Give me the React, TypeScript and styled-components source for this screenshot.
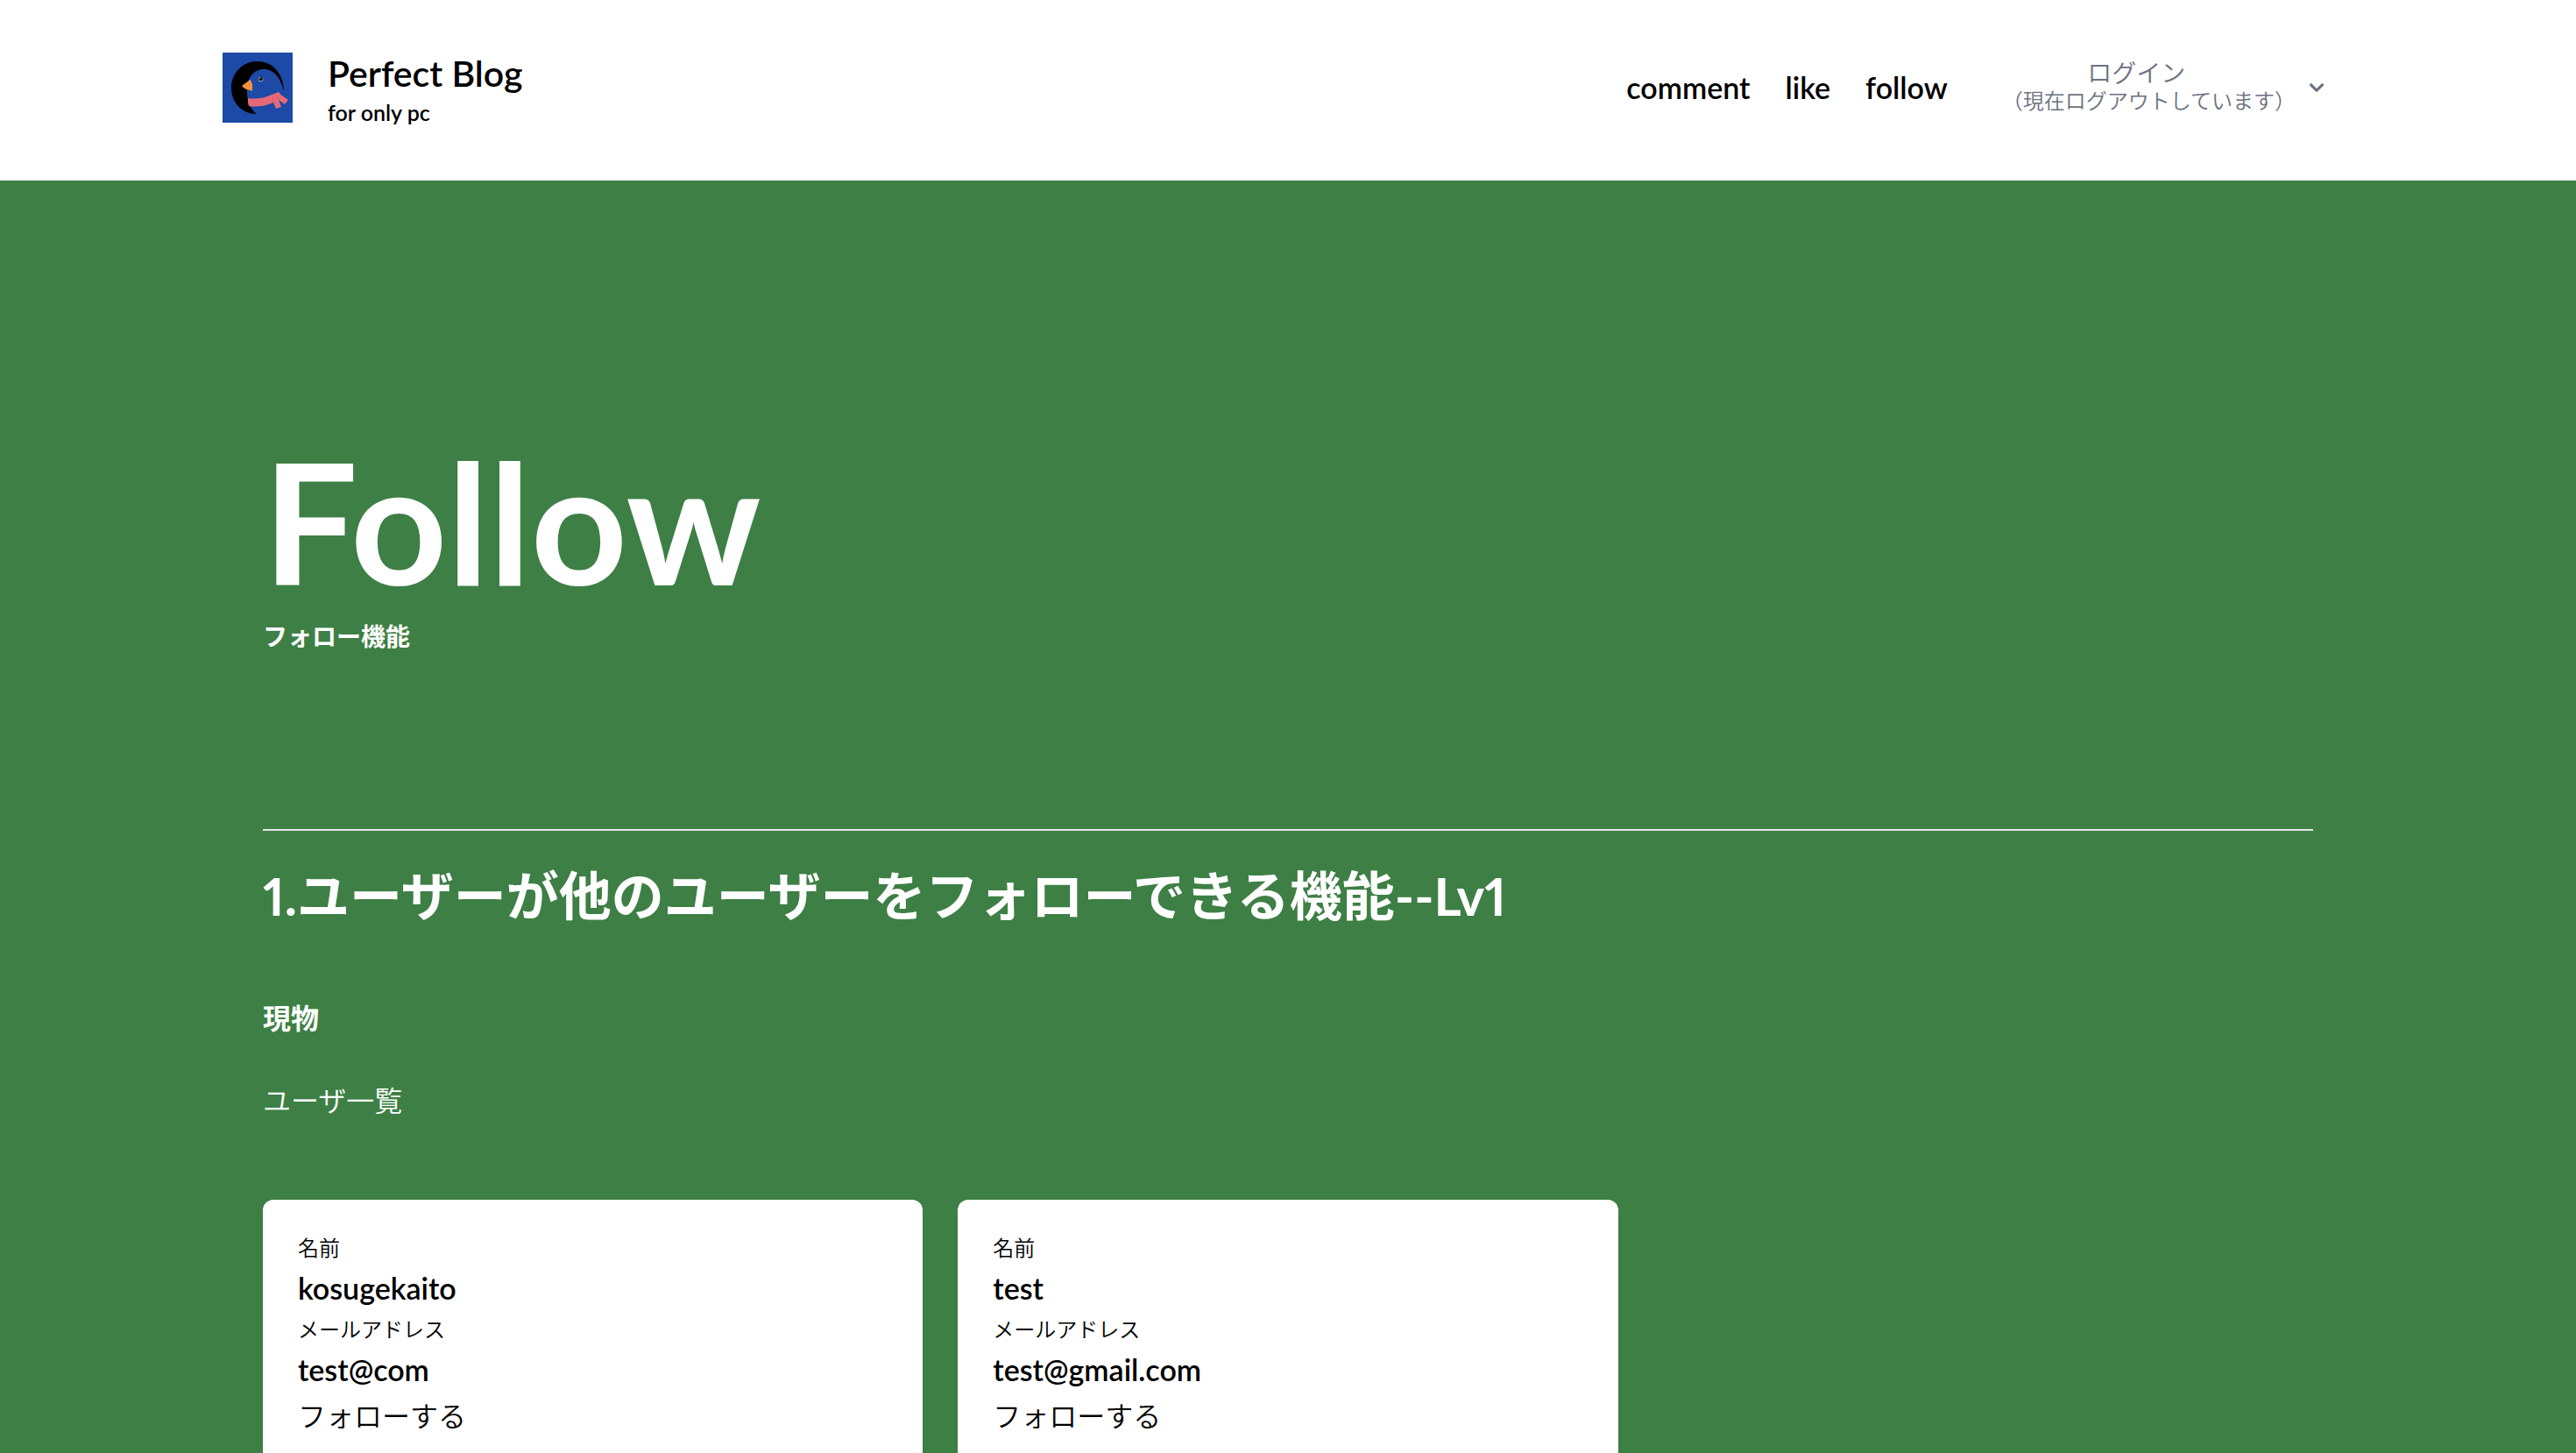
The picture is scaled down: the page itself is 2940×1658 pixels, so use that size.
import React from "react";
import styled, { createGlobalStyle } from "styled-components";

const GlobalStyle = createGlobalStyle`
  *, *::before, *::after { box-sizing: border-box; }
  html { background: #3e7f45; }
  body {
    margin: 0;
    color: #000;
    font-family: Lato, "Noto Sans CJK JP", sans-serif;
    font-size: 32px;
    line-height: 48px;
    font-variant-numeric: proportional-nums;
  }
  h1, h2, h3, p, dl, dd, ul { margin: 0; padding: 0; }
  a { color: inherit; text-decoration: none; }
`;

const Page = styled.div`
  background: #3e7f45;
  color: #fff;
`;

const Header = styled.header`
  background: #fff;
  color: #000;
  border-bottom: 2px solid #f3f4f6;
`;

const HeaderInner = styled.div`
  max-width: 2560px;
  height: 204px;
  margin: 0 auto;
  padding: 0 64px 4px;
  display: flex;
  align-items: center;
  justify-content: space-between;
`;

const Brand = styled.a`
  display: flex;
  align-items: center;
  gap: 40px;
`;

const Logo = styled.svg`
  display: block;
  width: 80px;
  height: 80px;
`;

const BrandText = styled.span`
  display: flex;
  flex-direction: column;
  padding-top: 8px;
  font-weight: 600;
`;

const BrandName = styled.span`
  font-size: 41px;
  line-height: 48px;
`;

const BrandNote = styled.span`
  font-size: 25px;
  line-height: 40px;
`;

const HeaderRight = styled.div`
  display: flex;
  align-items: center;
  gap: 40px;
`;

const Nav = styled.nav`
  display: flex;
  gap: 40px;
  font-size: 34px;
  font-weight: 600;
`;

const AccountButton = styled.button`
  display: flex;
  align-items: center;
  gap: 8px;
  padding: 0 26px 0 22px;
  border: 0;
  background: none;
  color: #6b7280;
  font-family: inherit;
  font-weight: 350;
  text-align: center;
  cursor: pointer;
`;

const AccountText = styled.span`
  display: flex;
  flex-direction: column;
  padding-bottom: 2px;
`;

const AccountAction = styled.span`
  padding-right: 28px;
  font-size: 28px;
  line-height: 32px;
`;

const AccountState = styled.span`
  font-size: 24px;
  line-height: 32px;
`;

const Chevron = styled.svg`
  display: block;
  width: 32px;
  height: 32px;
  fill: currentColor;
`;

const Main = styled.main`
  padding: 292px 300px 0;
`;

const Hero = styled.section`
  padding-bottom: 200px;
  font-weight: 600;
`;

const HeroTitle = styled.h1`
  font-size: 192px;
  line-height: 192px;
  font-weight: 700;
`;

const HeroCaption = styled.p`
  margin-top: 16px;
  font-size: 28px;
  line-height: 40px;
`;

const Feature = styled.section`
  border-top: 2px solid #e5e7eb;
  padding-top: 38px;
`;

const FeatureTitle = styled.h2`
  font-size: 60px;
  line-height: 72px;
  font-weight: 700;
`;

const Subheading = styled.h3`
  margin-top: 80px;
  font-size: 32px;
  line-height: 48px;
  font-weight: 600;
`;

const ListLabel = styled.p`
  margin-top: 46px;
  font-weight: 350;
`;

const UserGrid = styled.ul`
  margin-top: 89px;
  display: grid;
  grid-template-columns: repeat(3, 1fr);
  gap: 40px;
  list-style: none;
`;

const UserCard = styled.li`
  padding: 32px 40px 40px;
  border-radius: 12px;
  background: #fff;
  color: #000;
`;

const Field = styled.dl`
  display: flex;
  flex-direction: column;
`;

const FieldName = styled.dt`
  font-size: 24px;
  line-height: 45px;
  font-weight: 350;
`;

const FieldValue = styled.dd`
  font-size: 34px;
  line-height: 48px;
  font-weight: 600;
`;

const FollowButton = styled.button`
  display: block;
  padding: 0;
  border: 0;
  background: none;
  color: inherit;
  font-family: inherit;
  font-size: 32px;
  line-height: 58px;
  font-weight: 350;
  cursor: pointer;
`;

const links = ["comment", "like", "follow"];

const users = [
  { name: "kosugekaito", email: "test@com" },
  { name: "test", email: "test@gmail.com" },
];

const BirdLogo = () => (
  <Logo viewBox="0 0 80 80" aria-hidden="true">
    <rect width="80" height="80" fill="#1d49a7" />
    <path
      d="M39 70C22 70 10 57 10 40.500C10 23 23 10 40 10C57 10 69.500 24 70 44C66 29 59 19 47 19C38 19 32 25 29 33C27 40 28 50 29.500 57C31.500 62 34.500 67 39 70Z"
      fill="#000"
    />
    <path d="M22 38L31.500 31Q35 35 34 43Q33 44 31 43Q25 42 22 38Z" fill="#f2923c" />
    <circle cx="43.500" cy="30.500" r="2.800" fill="#a9adb3" />
    <circle cx="43.500" cy="30" r="2.300" fill="#111" />
    <circle cx="42.500" cy="29" r="0.700" fill="#fff" />
    <path
      d="M29 52Q43 54 56 48L64 45L66.500 48L75 54L71 59L64 54L67 62L61 64L58 57Q44 63 30 61Q28.500 57 29 52Z"
      fill="#e46a78"
    />
    <path d="M58 57L57 51M64 54L62 50" stroke="#cf5467" strokeWidth="0.800" fill="none" />
  </Logo>
);

export default function App() {
  return (
    <>
      <GlobalStyle />
      <Page>
        <Header>
          <HeaderInner>
            <Brand href="#">
              <BirdLogo />
              <BrandText>
                <BrandName>Perfect Blog</BrandName>
                <BrandNote>for only pc</BrandNote>
              </BrandText>
            </Brand>
            <HeaderRight>
              <Nav>
                {links.map((link) => (
                  <a key={link} href={`#${link}`}>
                    {link}
                  </a>
                ))}
              </Nav>
              <AccountButton type="button">
                <AccountText>
                  <AccountAction>ログイン</AccountAction>
                  <AccountState>（現在ログアウトしています）</AccountState>
                </AccountText>
                <Chevron viewBox="0 0 20 20" aria-hidden="true">
                  <path
                    fillRule="evenodd"
                    clipRule="evenodd"
                    d="M5.293 7.293a1 1 0 011.414 0L10 10.586l3.293-3.293a1 1 0 111.414 1.414l-4 4a1 1 0 01-1.414 0l-4-4a1 1 0 010-1.414z"
                  />
                </Chevron>
              </AccountButton>
            </HeaderRight>
          </HeaderInner>
        </Header>
        <Main>
          <Hero>
            <HeroTitle>Follow</HeroTitle>
            <HeroCaption>フォロー機能</HeroCaption>
          </Hero>
          <Feature>
            <FeatureTitle>1.ユーザーが他のユーザーをフォローできる機能--Lv1</FeatureTitle>
            <Subheading>現物</Subheading>
            <ListLabel>ユーザ一覧</ListLabel>
            <UserGrid>
              {users.map((user) => (
                <UserCard key={user.email}>
                  <Field>
                    <FieldName>名前</FieldName>
                    <FieldValue>{user.name}</FieldValue>
                    <FieldName>メールアドレス</FieldName>
                    <FieldValue>{user.email}</FieldValue>
                  </Field>
                  <FollowButton type="button">フォローする</FollowButton>
                </UserCard>
              ))}
            </UserGrid>
          </Feature>
        </Main>
      </Page>
    </>
  );
}
